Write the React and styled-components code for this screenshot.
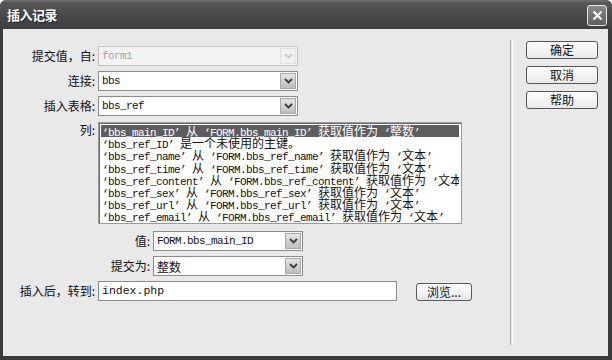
import React from 'react'
import styled, { createGlobalStyle } from 'styled-components'

const GlobalStyle = createGlobalStyle`
  html, body {
    margin: 0;
    padding: 0;
    width: 612px;
    height: 360px;
    overflow: hidden;
    background: #ffffff;
  }
`

const CJK = '"Noto Sans CJK SC", "Noto Sans", sans-serif'
const MONO = '"Liberation Mono", "Noto Sans CJK SC", monospace'

const columns = [
  '‘bbs_main_ID’  从 ‘FORM.bbs_main_ID’ 获取值作为 ‘整数’',
  '‘bbs_ref_ID’ 是一个未使用的主键。',
  '‘bbs_ref_name’ 从 ‘FORM.bbs_ref_name’ 获取值作为 ‘文本’',
  '‘bbs_ref_time’ 从 ‘FORM.bbs_ref_time’ 获取值作为 ‘文本’',
  '‘bbs_ref_content’ 从 ‘FORM.bbs_ref_content’ 获取值作为 ‘文本’',
  '‘bbs_ref_sex’ 从 ‘FORM.bbs_ref_sex’ 获取值作为 ‘文本’',
  '‘bbs_ref_url’ 从 ‘FORM.bbs_ref_url’ 获取值作为 ‘文本’',
  '‘bbs_ref_email’ 从 ‘FORM.bbs_ref_email’ 获取值作为 ‘文本’',
]

const Frame = styled.div`
  width: 612px;
  height: 360px;
  background: #3a3a3a;
  border-radius: 6px 6px 0 0;
  display: flex;
  flex-direction: column;
  overflow: hidden;
`
const TitleBar = styled.div`
  height: 29px;
  flex: none;
  display: flex;
  align-items: center;
  justify-content: space-between;
  padding: 0 5px 0 7px;
  background: linear-gradient(#707070 0, #575757 3px, #4a4a4a 50%, #3e3e3e 100%);
  border-radius: 6px 6px 0 0;
`
const Title = styled.div`
  color: #ffffff;
  font-family: ${CJK};
  font-size: 13px;
  font-weight: bold;
  letter-spacing: -0.5px;
  text-shadow: 1px 1px 0 #222;
`
const CloseButton = styled.div`
  width: 18px;
  height: 19px;
  margin-top: 2px;
  border: 1px solid #e8e8e8;
  border-radius: 3px;
  background: linear-gradient(#8a8a8a, #5e5e5e);
  display: flex;
  align-items: center;
  justify-content: center;
`
const Body = styled.div`
  flex: 1;
  display: flex;
  margin: 0 4px 4px 3px;
  background: #e9e9e9;
`
const Form = styled.div`
  width: 507px;
  padding-top: 17px;
  display: flex;
  flex-direction: column;
  gap: 5px;
`
const Row = styled.div`
  display: flex;
  align-items: ${(p) => (p.$top ? 'flex-start' : 'center')};
  gap: 3px;
  margin-top: ${(p) => p.$shift || 0}px;
`
const Label = styled.div`
  width: ${(p) => p.$width}px;
  flex: none;
  text-align: right;
  font-family: ${CJK};
  font-size: 12px;
  line-height: 16px;
  color: #111;
  padding-top: ${(p) => (p.$top ? 1 : 0)}px;
`
const SelectBox = styled.div`
  box-sizing: border-box;
  width: ${(p) => p.$width}px;
  height: 20px;
  display: flex;
  align-items: center;
  border: 1px solid ${(p) => (p.$disabled ? '#c4c4c4' : '#8c8c8c')};
  background: ${(p) => (p.$disabled ? '#f2f2f2' : '#ffffff')};
`
const SelectText = styled.div`
  flex: 1;
  padding-left: 3px;
  font-family: ${MONO};
  font-size: 11px;
  letter-spacing: -0.6px;
  color: ${(p) => (p.$disabled ? '#a6a6a6' : '#111')};
  white-space: nowrap;
  overflow: hidden;
`
const ArrowBox = styled.div`
  box-sizing: border-box;
  width: 16px;
  height: 16px;
  margin: 0 1px;
  display: flex;
  align-items: center;
  justify-content: center;
  border: 1px solid ${(p) => (p.$disabled ? '#e0e0e0' : '#a8a8a8')};
  background: ${(p) =>
    p.$disabled ? '#f0f0f0' : 'linear-gradient(#e4e4e4, #bdbdbd)'};
`
const ListBox = styled.div`
  box-sizing: border-box;
  width: 364px;
  height: 102px;
  margin-top: 1px;
  padding: 2px;
  border: 1px solid #9a9a9a;
  box-shadow: inset 1px 1px 0 #6a6a6a;
  background: #ffffff;
  overflow: hidden;
`
const ListItem = styled.div`
  height: 12.2px;
  line-height: 12px;
  padding-left: 1px;
  white-space: nowrap;
  overflow: hidden;
  font-family: ${MONO};
  font-size: 11px;
  letter-spacing: -0.6px;
  color: ${(p) => (p.$selected ? '#ffffff' : '#111')};
  background: ${(p) => (p.$selected ? '#5e5e5e' : 'transparent')};
`
const Wide = styled.span`
  font-family: ${CJK};
  font-size: 12px;
  letter-spacing: 0;
`
const TextInput = styled.div`
  box-sizing: border-box;
  width: 299px;
  height: 20px;
  padding-left: 3px;
  border: 1px solid #8c8c8c;
  background: #ffffff;
  font-family: ${MONO};
  font-size: 11.5px;
  line-height: 18px;
  color: #111;
`
const BrowseButton = styled.div`
  box-sizing: border-box;
  width: 56px;
  height: 18px;
  margin: 2px 0 0 16px;
  border: 1px solid #5a5a5a;
  border-radius: 3px;
  background: linear-gradient(#ffffff, #e6e6e6);
  font-family: ${CJK};
  font-size: 12px;
  line-height: 16px;
  text-align: center;
  color: #111;
`
const Divider = styled.div`
  width: 1px;
  margin: 11px 0 11px;
  border-left: 1px solid #a9a9a9;
  border-right: 1px solid #ffffff;
`
const Actions = styled.div`
  display: flex;
  flex-direction: column;
  gap: 7px;
  padding: 12px 0 0 13px;
`
const ActionButton = styled.div`
  box-sizing: border-box;
  width: 72px;
  height: 18px;
  border: 1px solid #555;
  border-radius: 3px;
  background: linear-gradient(#ffffff, #e8e8e8);
  font-family: ${CJK};
  font-size: 12px;
  line-height: 16px;
  text-align: center;
  color: #111;
`

function Chevron({ disabled }) {
  return (
    <svg width="9" height="6" viewBox="0 0 9 6">
      <path
        d="M1 1 L4.5 4.5 L8 1"
        fill="none"
        stroke={disabled ? '#c8c8c8' : '#3c3c3c'}
        strokeWidth="1.8"
      />
    </svg>
  )
}

function Mixed({ text }) {
  const parts = text.split(/([\u3000-\u303f\u4e00-\u9fff\uff00-\uffef]+)/)
  return parts.map((part, i) =>
    i % 2 === 1 ? <Wide key={i}>{part}</Wide> : <React.Fragment key={i}>{part}</React.Fragment>
  )
}

function Select({ width, value, disabled }) {
  return (
    <SelectBox $width={width} $disabled={disabled}>
      <SelectText $disabled={disabled}>
        <Mixed text={value} />
      </SelectText>
      <ArrowBox $disabled={disabled}>
        <Chevron disabled={disabled} />
      </ArrowBox>
    </SelectBox>
  )
}

export default function App() {
  return (
    <>
      <GlobalStyle />
      <Frame>
        <TitleBar>
          <Title>插入记录</Title>
          <CloseButton>
            <svg width="11" height="11" viewBox="0 0 11 11">
              <path d="M1.5 1.5 L9.5 9.5 M9.5 1.5 L1.5 9.5" stroke="#fff" strokeWidth="2" />
            </svg>
          </CloseButton>
        </TitleBar>
        <Body>
          <Form>
            <Row>
              <Label $width={92}>提交值，自:</Label>
              <Select width={200} value="form1" disabled />
            </Row>
            <Row>
              <Label $width={92}>连接:</Label>
              <Select width={200} value="bbs" />
            </Row>
            <Row>
              <Label $width={92}>插入表格:</Label>
              <Select width={200} value="bbs_ref" />
            </Row>
            <Row $top>
              <Label $width={92} $top>列:</Label>
              <ListBox>
                {columns.map((c, i) => (
                  <ListItem key={i} $selected={i === 0}>
                    <Mixed text={c} />
                  </ListItem>
                ))}
              </ListBox>
            </Row>
            <Row $shift={2}>
              <Label $width={147}>值:</Label>
              <Select width={150} value="FORM.bbs_main_ID" />
            </Row>
            <Row>
              <Label $width={147}>提交为:</Label>
              <Select width={150} value="整数" />
            </Row>
            <Row>
              <Label $width={92}>插入后，转到:</Label>
              <TextInput>index.php</TextInput>
              <BrowseButton>浏览...</BrowseButton>
            </Row>
          </Form>
          <Divider />
          <Actions>
            <ActionButton>确定</ActionButton>
            <ActionButton>取消</ActionButton>
            <ActionButton>帮助</ActionButton>
          </Actions>
        </Body>
      </Frame>
    </>
  )
}
